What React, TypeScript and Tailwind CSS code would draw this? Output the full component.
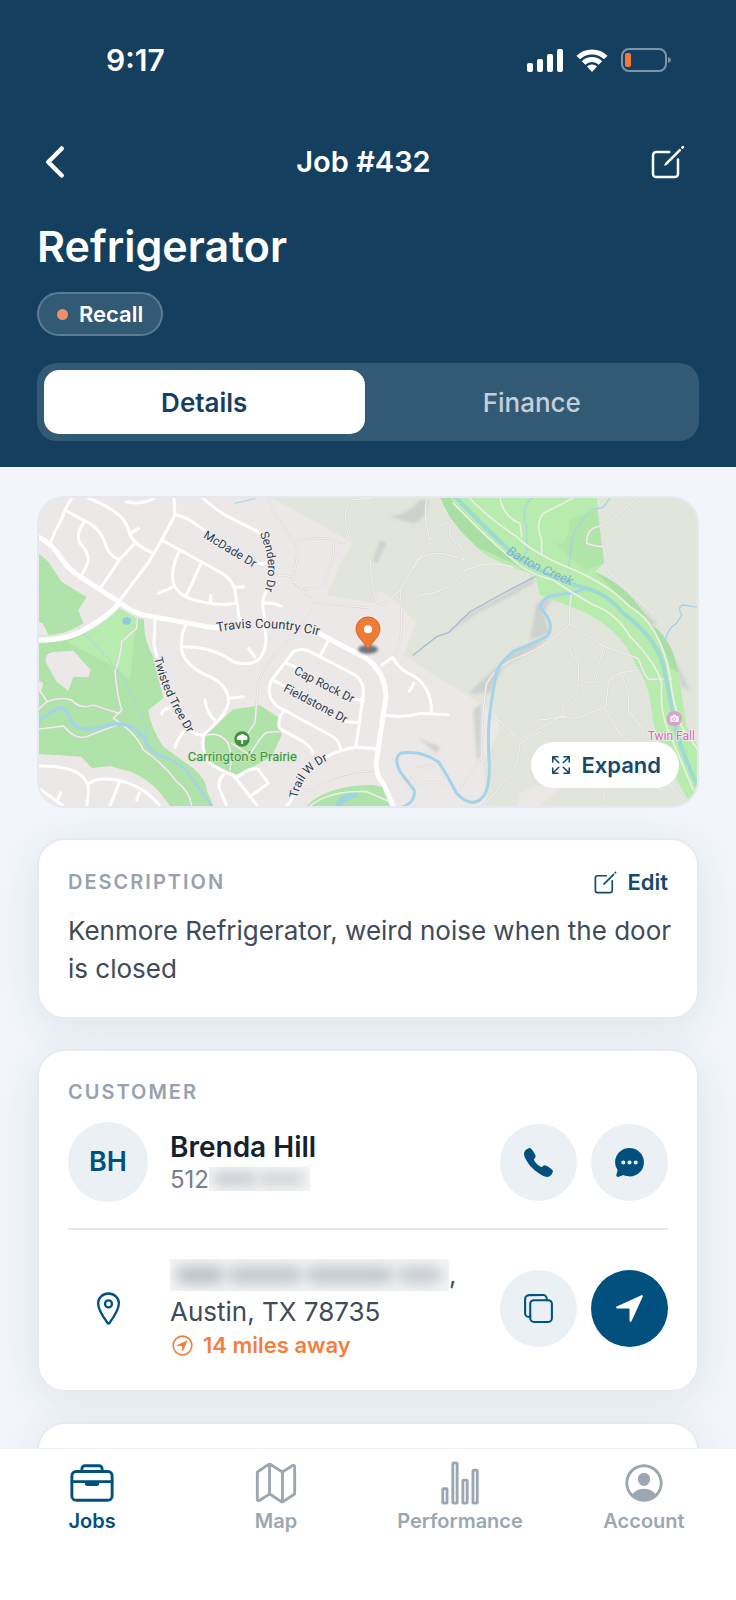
import React, { useState } from 'react';
import {
  IoBriefcaseOutline,
  IoCall,
  IoChatbubbleEllipses,
  IoChevronBack,
  IoCopyOutline,
  IoCreateOutline,
  IoExpandOutline,
  IoLocationOutline,
  IoMapOutline,
  IoNavigate,
  IoNavigateCircleOutline,
  IoPersonCircleOutline,
  IoStatsChartOutline,
} from 'react-icons/io5';

const tabs = ['Details', 'Finance'];

const navItems = [
  { label: 'Jobs', icon: IoBriefcaseOutline },
  { label: 'Map', icon: IoMapOutline },
  { label: 'Performance', icon: IoStatsChartOutline },
  { label: 'Account', icon: IoPersonCircleOutline },
];

// Road geometry, grouped by line width
const mainRoads = [
  'M40 165 Q75 175 110 215 Q140 265 180 290 L300 368 Q345 405 400 410 L560 440 L600 444',
  'M40 480 Q150 485 215 435 Q260 412 298 370',
  'M900 462 L1030 530 Q1095 570 1098 650 L1068 850 Q1068 890 1090 910 L1122 985',
];

const streets = [
  'M155 54 L135 90 Q125 120 105 155 L90 190',
  'M135 90 L185 118 Q240 140 255 190 Q265 225 295 238',
  'M195 124 Q165 160 180 190 Q205 215 205 240 Q200 260 185 285',
  'M205 54 Q265 78 300 108 Q320 125 330 165 Q345 195 395 218',
  'M330 160 L356 146',
  'M345 190 L298 240 L243 322',
  'M320 66 Q370 75 405 54',
  'M462 54 L465 105 L425 180 L385 248 L300 360',
  'M467 105 Q500 110 530 135 L556 152',
  'M425 180 L545 246 L610 282 Q645 305 648 350 L660 428',
  'M545 50 Q590 95 640 118 Q690 142 725 162',
  'M480 210 Q450 265 460 310 Q475 350 530 362 Q600 380 648 370',
  'M545 246 L498 350',
  'M455 323 L415 340 M572 370 L572 346 M648 322 L670 320',
  'M700 245 Q725 255 740 248',
  'M742 330 Q728 345 728 380 Q738 420 735 450 Q745 500 720 535 Q690 562 640 545 Q580 500 490 500',
  'M730 370 Q760 366 783 378 M686 506 L704 530',
  'M405 420 L402 490 L410 528',
  'M498 432 Q480 470 485 510 Q495 560 570 590 Q630 620 625 670 Q615 710 555 760 Q540 790 560 840 Q590 870 640 885 L712 978',
  'M625 655 L670 650 M555 660 Q560 700 588 725',
  'M425 702 Q430 685 448 684 M465 803 Q475 770 492 755 M515 755 Q530 765 550 766',
  'M610 885 Q590 905 600 930 L620 978',
  'M655 890 Q690 860 715 868 L745 910 L697 945',
  'M925 482 L902 525',
  'M820 515 Q850 500 880 520 L1000 582 Q1032 600 1030 640 L1008 800',
  'M820 515 L755 600 Q735 645 770 678 L930 765 Q960 780 962 810',
  'M800 550 L828 562 M762 602 L792 618 M998 655 L1030 662 M978 725 L1018 728',
  'M792 692 Q770 720 778 745 L850 785 Q875 800 880 822',
  'M800 978 Q812 968 818 950 M915 832 Q970 805 1010 802 L1072 806',
  'M54 858 Q140 858 175 880 Q210 905 205 940 L200 978',
  'M205 912 Q230 890 290 900 Q370 915 420 978',
  'M54 922 Q90 950 130 978 M122 938 L114 958 M298 908 L270 978 M358 938 L350 960',
  'M1085 555 L1118 532 Q1135 570 1185 590 Q1235 625 1234 695',
  'M1182 610 L1168 634 M1095 706 Q1150 715 1200 700 L1284 704',
];

const trails = [
  'M54 690 L80 665 Q120 650 155 660 Q180 690 220 675 Q260 690 300 700 M58 630 L82 665',
  'M352 415 L350 445 L305 485 Q302 530 285 575 Q290 640 305 690 L280 715 Q350 760 370 810 Q430 850 470 905 Q510 935 515 978',
  'M54 748 L130 738 Q165 780 200 770 L290 735',
  'M745 54 Q755 100 790 135 Q810 170 820 190 Q870 165 940 180 Q980 205 985 165 Q965 110 990 60 L1060 54',
  'M985 165 Q1005 200 1050 240 Q1055 300 1065 350 L1075 385 M830 188 Q835 250 818 295 Q830 330 880 325 Q925 320 915 290 Q950 230 938 185',
  'M775 285 L818 290 M818 295 Q860 345 880 365 Q1000 380 1065 385',
  'M890 370 Q830 470 760 530 Q710 590 712 640 L705 728 L685 758',
  'M560 765 Q600 755 625 790 L635 830 L630 870 M635 790 L690 825 Q720 770 740 757 L780 755',
  'M845 920 Q870 950 900 910 Q980 875 1060 872',
  'M1050 385 Q1090 380 1140 330 L1180 260 L1190 240 Q1250 200 1330 240 M1145 390 L1200 345 Q1290 340 1330 275 Q1400 235 1480 262',
  'M1140 330 Q1150 420 1140 490 L1118 530 M1220 54 Q1210 120 1230 180 L1182 265 M1230 180 Q1275 110 1290 130 Q1280 180 1325 200 L1330 240',
  'M1655 338 Q1645 400 1650 432 Q1580 500 1500 530 Q1430 555 1400 610 Q1385 700 1385 830 L1310 940',
  'M1650 432 L1755 500 L1855 535 Q1870 580 1885 598 L1955 596',
  'M1650 490 Q1640 520 1675 545 L1675 605 L1725 608 Q1735 560 1752 500 M1675 610 L1670 640 L1625 680 L1635 710 L1560 720',
  'M1850 570 Q1770 580 1765 610 L1758 680 L1670 715 L1620 710 L1500 780 Q1450 730 1420 710',
  'M1755 685 L1800 760 L1910 870 L2010 978 M1800 580 Q1830 620 1825 690 L1870 750',
  'M1560 755 L1500 790 Q1490 880 1450 910 L1390 978 M1750 920 L1755 978',
  'M1755 250 Q1770 290 1800 310 L1900 400 M1850 54 Q1770 130 1735 140 Q1700 145 1700 190 Q1730 200 1750 200 L1765 250',
  'M1170 900 Q1240 830 1300 920 M1165 930 Q1250 870 1340 960 M1190 860 L1260 850',
];

const parkTrails = [
  'M1300 70 L1350 120 Q1420 190 1480 240 Q1520 280 1600 300 Q1650 335 1720 375 Q1790 400 1830 470 Q1910 550 1925 610 Q1920 690 1940 740 L2020 930',
  'M1345 50 Q1400 110 1490 170 Q1540 220 1650 265 Q1760 310 1830 380 Q1920 430 1950 590 Q1960 680 1985 740 L2034 810',
  'M1440 54 Q1450 110 1500 130 L1505 170 M1660 54 L1570 100 Q1545 130 1565 180 L1565 220',
];

const MapCanvas: React.FC = () => (
  <svg
    viewBox="57 54 1974 924"
    preserveAspectRatio="xMidYMid slice"
    role="img"
    aria-label="Map of the job location"
    className="block h-[308px] w-full bg-[#ece8e7] font-[Roboto,sans-serif]"
  >
    <defs>
      <path id="sendero" d="M719 160 Q744 220 744 262 Q744 300 730 350" />
      <path id="travis" d="M592 456 Q745 425 925 474" />
      <path id="twisted" d="M402 534 Q424 640 516 780" />
      <path id="trail" d="M832 956 Q845 870 945 832" />
      <path id="barton" d="M1458 220 Q1530 270 1700 336" />
      <filter id="soft" x="-20%" y="-20%" width="140%" height="140%">
        <feGaussianBlur stdDeviation="5" />
      </filter>
    </defs>

    {/* Open land */}
    <path
      d="M750 50 L1000 190 Q960 240 945 290 L920 345 L1060 368 L1080 330 L1140 375 L1188 430 L1150 525 L1240 585 L1350 650 L1430 705 L1440 750 L1390 850 L1400 978 L2040 978 L2040 50 Z"
      fill="#e1e5dc"
    />
    <path d="M1500 940 Q1580 900 1640 910 L1560 978 L1490 978 Z" fill="#ebe7e5" />

    {/* Hill shading */}
    <g fill="#c6cbca" filter="url(#soft)" opacity="0.75">
      <path d="M1200 60 L1225 60 Q1220 120 1180 130 L1110 110 Q1170 100 1200 60 Z" />
      <path d="M1060 240 L1080 180 L1100 190 L1070 250 Z" />
      <path d="M1280 460 L1350 400 L1460 340 L1545 290 L1540 310 L1440 365 L1370 400 L1290 455 Z" />
      <path d="M1550 370 L1600 350 L1570 400 L1590 460 L1530 480 Z" />
      <path d="M1430 560 L1480 510 L1590 470 L1540 510 L1450 560 L1410 640 L1345 640 Z" />
      <path d="M1740 300 L1840 360 L1910 430 L1890 440 L1800 360 Z" />
      <path d="M1195 775 L1260 800 L1250 820 Z M1960 530 L2010 630 L1985 620 Z" />
      <path d="M1360 690 L1385 670 L1380 850 L1370 830 Z" />
    </g>

    {/* Parks */}
    <g fill="#b0e3a9">
      <path d="M54 218 L85 245 L125 305 L200 352 L175 390 L190 430 Q130 470 54 468 Z" />
      <path d="M54 485 L140 480 Q230 455 298 385 L350 415 L372 418 Q370 480 400 530 L430 655 L385 690 Q390 740 430 800 L520 865 Q560 900 560 930 L580 978 L450 978 Q400 900 330 875 L270 858 L215 865 L185 830 L54 822 Z" />
      <path d="M640 688 L720 676 L775 712 L785 765 L755 830 L690 865 L645 885 L570 845 Q545 800 555 765 Z" />
      <path d="M860 978 Q920 915 1060 915 L1100 925 L1120 978 Z" />
    </g>
    <path d="M140 485 Q230 455 298 385 L350 415 L330 600 L290 565 Z" fill="#b8ebae" />
    <path
      d="M1262 50 L1730 50 L1740 150 L1752 250 L1725 275 Q1830 320 1890 430 Q1960 480 1975 580 L2000 740 L2040 810 L2040 978 L2015 978 L1930 830 L1898 720 Q1890 610 1850 560 Q1800 430 1640 375 L1560 345 L1545 285 Q1400 240 1370 200 Q1280 120 1262 50 Z"
      fill="#b8ebae"
    />
    <g fill="#a9dfa4">
      <path d="M1262 54 L1290 54 Q1360 150 1480 240 L1530 275 L1370 200 Q1290 130 1262 54 Z" />
      <path d="M1590 170 Q1640 230 1650 120 L1730 90 L1740 150 L1752 250 L1700 270 Q1650 240 1590 170 Z" opacity="0.5" />
      <path d="M1725 275 Q1830 320 1890 430 Q1960 480 1975 580 L1950 560 Q1920 440 1830 380 Z" />
    </g>
    <path d="M78 548 Q70 520 105 515 L160 512 L185 540 L212 570 L205 592 L160 590 L145 632 L110 605 Z" fill="#ece8e7" />
    <path d="M54 425 L68 430 L85 465 L54 468 Z M54 600 L70 610 L65 630 L54 632 Z" fill="#ece8e7" />

    {/* Minor trails sit under the water and streets */}
    <g fill="none" strokeLinecap="round" strokeLinejoin="round">
      <g stroke="#d3d1cf" strokeWidth="6">
        {trails.map((d) => (
          <path key={d} d={d} />
        ))}
      </g>
      <g stroke="#f1efed" strokeWidth="4">
        {trails.map((d) => (
          <path key={d} d={d} />
        ))}
      </g>
    </g>

    {/* Water */}
    <g fill="none" stroke="#a4d3ea" strokeLinecap="round">
      <path d="M54 725 Q95 690 125 683 Q145 695 155 730 Q190 755 230 745 L290 730 Q350 735 375 780 Q390 820 430 830" strokeWidth="10" />
      <path d="M430 830 Q490 850 520 900 L575 978" strokeWidth="7" />
      <path d="M54 322 Q110 350 150 415 Q200 470 240 510 Q310 580 330 640 Q375 700 382 780" strokeWidth="3" opacity="0.8" />
      <path d="M1135 985 Q1190 970 1182 930 L1140 875 Q1120 835 1142 820 Q1200 810 1255 845 Q1285 890 1310 940 Q1350 985 1385 955 Q1410 930 1408 850 Q1400 750 1415 660 L1425 600 Q1425 560 1480 515 Q1540 490 1580 470 Q1605 440 1575 400 Q1545 370 1590 348 L1650 340 L1700 325" strokeWidth="9" />
      <path d="M1310 54 Q1410 160 1490 230 Q1600 300 1700 325 Q1760 340 1810 400 Q1920 480 1935 580 Q1955 680 1965 740 Q1990 830 2034 920" stroke="#9fdad2" strokeWidth="12" />
      <path d="M1535 54 Q1500 90 1520 140 L1520 220 M1770 54 L1750 82 L1710 90 L1660 160 L1645 270" strokeWidth="5" opacity="0.7" />
      <path d="M1180 525 L1250 470 L1285 458 L1350 395 L1440 345 L1545 290" stroke="#a5bbd6" strokeWidth="4" />
      <path d="M1935 500 Q1935 450 1970 430 L1985 405 Q1970 380 1990 375 L2034 382" strokeWidth="4" />
      <path d="M645 70 L705 56" strokeWidth="3" />
    </g>
    <ellipse cx="320" cy="423" rx="13" ry="11" fill="#8ecbe0" />
    <path d="M945 978 Q955 940 1010 937 Q1030 945 975 965 L965 978 Z" fill="#9ed3e0" />

    {/* Roads */}
    <g fill="none" strokeLinecap="round" strokeLinejoin="round">
      <g stroke="#ecefe4" strokeWidth="5">
        {parkTrails.map((d) => (
          <path key={d} d={d} />
        ))}
        <path d="M870 978 Q930 930 1040 935 L1110 965" />
      </g>
      <g stroke="#ffffff" strokeWidth="9">
        {streets.map((d) => (
          <path key={d} d={d} />
        ))}
      </g>
      <g stroke="#ffffff" strokeWidth="15">
        {mainRoads.map((d) => (
          <path key={d} d={d} />
        ))}
      </g>
    </g>

    {/* Labels */}
    <g
      fontSize="36"
      fill="#2f3b4f"
      stroke="#f3f0ef"
      strokeWidth="6"
      strokeLinejoin="round"
      paintOrder="stroke"
    >
      <text transform="translate(548 172) rotate(31)">McDade Dr</text>
      <text transform="translate(820 580) rotate(27)">Cap Rock Dr</text>
      <text transform="translate(788 632) rotate(28)">Fieldstone Dr</text>
      <text><textPath href="#sendero">Sendero Dr</textPath></text>
      <text fontSize="39"><textPath href="#travis">Travis Country Cir</textPath></text>
      <text><textPath href="#twisted">Twisted Tree Dr</textPath></text>
      <text><textPath href="#trail">Trail W Dr</textPath></text>
      <text fill="#7db3cf" stroke="none" fontStyle="italic" fontSize="39">
        <textPath href="#barton">Barton Creek</textPath>
      </text>
      <text x="667" y="844" textAnchor="middle" fill="#43903f" stroke="#c6ecc0" strokeWidth="4" fontSize="39">
        Carrington’s Prairie
      </text>
      <text x="1883" y="781" fill="#cf6db2" strokeWidth="5">
        Twin Fall
      </text>
    </g>

    {/* Points of interest */}
    <circle cx="666" cy="777" r="23" fill="#43903f" />
    <path d="M652 780 Q648 768 660 766 Q667 758 674 766 Q686 768 681 780 L669 781 L669 792 L664 792 L664 781 Z" fill="#fff" />
    <circle cx="1963" cy="716" r="23" fill="#dd9fd2" />
    <path d="M1951 709 H1957 L1960 704 H1967 L1970 709 H1976 V726 H1951 Z" fill="#fff" />
    <circle cx="1963" cy="717" r="5" fill="#fff" stroke="#dd9fd2" strokeWidth="3" />

    {/* Job pin */}
    <ellipse cx="1044" cy="508" rx="30" ry="13" fill="#6c7480" filter="url(#soft)" />
    <path
      d="M1044 508 C1030 482 1008 470 1008 446 A36 35 0 0 1 1080 446 C1080 470 1058 482 1044 508 Z"
      fill="#ef7b37"
      stroke="#d9652a"
      strokeWidth="3"
    />
    <circle cx="1044" cy="448" r="12" fill="#fff" />
  </svg>
);

const StatusBar: React.FC = () => (
  <div className="flex h-8 items-center justify-between pr-7 pl-[69px] text-white">
    <span className="text-[30px] leading-8 font-semibold">9:17</span>
    <div className="flex items-center gap-[13px]">
      <svg width="36" height="24" viewBox="0 0 36 24" fill="currentColor" aria-hidden="true">
        <rect x="0" y="15" width="6" height="9" rx="2" />
        <rect x="10" y="11" width="6" height="13" rx="2" />
        <rect x="20" y="6" width="6" height="18" rx="2" />
        <rect x="30" y="1" width="6" height="23" rx="2" />
      </svg>
      <svg width="32" height="24" viewBox="0 0 32 24" aria-hidden="true">
        <g fill="none" stroke="currentColor" strokeWidth="5">
          <path d="M2.2 9.6 A19.5 19.5 0 0 1 29.8 9.6" />
          <path d="M7.6 15 A12 12 0 0 1 24.4 15" />
        </g>
        <path d="M16 24 L11 18.6 A7 7 0 0 1 21 18.6 Z" fill="currentColor" />
      </svg>
      <svg width="50" height="24" viewBox="0 0 50 24" aria-hidden="true">
        <rect x="1" y="1" width="44" height="22" rx="7" fill="none" stroke="#7d95a8" strokeWidth="2" />
        <rect x="4" y="5" width="6" height="14" rx="2" fill="#f27a35" />
        <path d="M47 9 Q50 10 50 12 Q50 14 47 15 Z" fill="#7d95a8" />
      </svg>
    </div>
  </div>
);

interface CircleButtonProps {
  label: string;
  primary?: boolean;
  children: React.ReactNode;
}

const CircleButton: React.FC<CircleButtonProps> = ({ label, primary, children }) => (
  <button
    type="button"
    aria-label={label}
    className={`flex size-[77px] shrink-0 items-center justify-center rounded-full ${
      primary ? 'bg-[#02507d] text-white' : 'bg-[#ebf0f5] text-[#02507d]'
    }`}
  >
    {children}
  </button>
);

const Card: React.FC<{ className?: string; children?: React.ReactNode }> = ({ className = '', children }) => (
  <section
    className={`rounded-[28px] border-2 border-[#e7ebf1] bg-white px-[29px] pt-[26px] shadow-[0_8px_44px_rgba(40,55,75,0.09)] ${className}`}
  >
    {children}
  </section>
);

const CardTitle: React.FC<{ children: React.ReactNode }> = ({ children }) => (
  <h2 className="text-[20px] leading-[30px] font-semibold tracking-widest text-[#98a2ae] uppercase">{children}</h2>
);

const App: React.FC = () => {
  const [activeTab, setActiveTab] = useState('Details');
  const [activeNav, setActiveNav] = useState('Jobs');

  return (
    <div className="flex h-screen flex-col bg-[#f2f6fb] font-[Inter,'Liberation_Sans',sans-serif]">
      <header className="relative z-10 shrink-0 bg-[#143f5e] px-[37px] pt-11 pb-[26px] text-white">
        <StatusBar />

        <div className="mt-[62px] flex h-12 items-center justify-between pr-[11px]">
          <button type="button" aria-label="Back" className="-ml-1.5">
            <IoChevronBack size={48} />
          </button>
          <p className="text-[29px] leading-9 font-semibold">Job #432</p>
          <button type="button" aria-label="Edit job">
            <IoCreateOutline size={40} />
          </button>
        </div>

        <h1 className="mt-8 text-[43px] leading-[56px] font-semibold">Refrigerator</h1>

        <div className="mt-[18px] flex h-11 w-fit items-center gap-[11px] rounded-full border-2 border-[#5c7a91] bg-[#335a75] px-[18px]">
          <span className="size-[11px] rounded-full bg-[#ee8f67]" />
          <span className="text-[22px] leading-8 font-semibold">Recall</span>
        </div>

        <div role="tablist" className="mt-[27px] flex gap-[7px] rounded-[20px] bg-[#335a75] p-[7px]">
          {tabs.map((tab) => (
            <button
              key={tab}
              type="button"
              role="tab"
              aria-selected={activeTab === tab}
              onClick={() => setActiveTab(tab)}
              className={`h-16 flex-1 rounded-[15px] text-[26px] ${
                activeTab === tab ? 'bg-white font-semibold text-[#143f5e]' : 'font-medium text-[#c3d0db]'
              }`}
            >
              {tab}
            </button>
          ))}
        </div>
      </header>

      <main className="flex min-h-0 flex-1 flex-col gap-[30px] overflow-y-auto px-[37px] pt-[29px] [scrollbar-width:none] *:shrink-0">
        <section className="relative overflow-hidden rounded-[28px] border-2 border-[#e4e9ef]">
          <MapCanvas />
          <button
            type="button"
            className="absolute right-[18px] bottom-[18px] flex h-[46px] items-center gap-2 rounded-full bg-white px-[18px] text-[22px] font-semibold text-[#134a70]"
          >
            <IoExpandOutline size={24} />
            Expand
          </button>
        </section>

        <Card className="pb-[29px]">
          <div className="flex items-center justify-between">
            <CardTitle>Description</CardTitle>
            <button type="button" className="flex items-center gap-2 text-[22px] leading-8 font-semibold text-[#134a70]">
              <IoCreateOutline size={27} />
              Edit
            </button>
          </div>
          <p className="mt-[14px] -mr-2 text-[26px] leading-[38px] text-[#3f4b5a]">
            Kenmore Refrigerator, weird noise when the door is closed
          </p>
        </Card>

        <Card className="pb-[30px]">
          <CardTitle>Customer</CardTitle>
          <div className="mt-[15px] flex items-center border-b-2 border-[#e3e8ef] pb-[26px]">
            <div className="flex size-20 shrink-0 items-center justify-center rounded-full bg-[#ebf0f5] text-[27px] font-semibold text-[#02507d]">
              BH
            </div>
            <div className="ml-[22px] min-w-0 flex-1">
              <p className="text-[28px] leading-[34px] font-semibold text-[#14212f]">Brenda Hill</p>
              <p className="flex items-center text-2xl leading-[31px] text-[#76808d]">
                512
                <span className="flex h-6 w-[101px] items-center overflow-hidden bg-[#f3f4f5] px-1" aria-hidden="true">
                  <span className="h-4 w-11 rounded-full bg-[#ccd1d5] blur-[6px]" />
                  <span className="h-4 w-12 rounded-full bg-[#d5d9da] blur-[6px]" />
                </span>
              </p>
            </div>
            <div className="flex gap-[14px]">
              <CircleButton label="Call customer">
                <IoCall size={33} />
              </CircleButton>
              <CircleButton label="Message customer">
                <IoChatbubbleEllipses size={33} />
              </CircleButton>
            </div>
          </div>

          <div className="flex items-center pt-[26px]">
            <div className="flex w-20 shrink-0 justify-center text-[#02507d]">
              <IoLocationOutline size={37} />
            </div>
            <div className="ml-[22px] min-w-0 flex-1">
              <address className="text-[26px] leading-[37px] text-[#3f4b5a] not-italic">
                <span className="flex items-center">
                  <span className="flex h-8 w-[279px] items-center gap-1 overflow-hidden bg-[#f3f4f5] px-1.5" aria-hidden="true">
                    <span className="h-4 w-12 rounded-full bg-[#b3bac0] blur-[7px]" />
                    <span className="h-4 w-[74px] rounded-full bg-[#bcc3c8] blur-[7px]" />
                    <span className="h-4 w-[88px] rounded-full bg-[#bcc3c8] blur-[7px]" />
                    <span className="h-4 w-11 rounded-full bg-[#c2c8cc] blur-[7px]" />
                  </span>
                  ,
                </span>
                Austin, TX 78735
              </address>
              <p className="flex items-center gap-2 text-[22px] leading-[30px] font-semibold text-[#f27f3d]">
                <IoNavigateCircleOutline size={25} />
                14 miles away
              </p>
            </div>
            <div className="flex gap-[14px]">
              <CircleButton label="Copy address">
                <IoCopyOutline size={33} />
              </CircleButton>
              <CircleButton label="Start navigation" primary>
                <IoNavigate size={33} />
              </CircleButton>
            </div>
          </div>
        </Card>

        <Card className="h-40" />
      </main>

      <nav className="relative grid h-[152px] shrink-0 grid-cols-4 items-start border-t border-[#eaf0f9] bg-white pt-[11px]">
        {navItems.map(({ label, icon: Icon }) => (
          <button
            key={label}
            type="button"
            onClick={() => setActiveNav(label)}
            className={`flex flex-col items-center text-xl leading-[30px] font-semibold ${
              activeNav === label ? 'text-[#02507d]' : 'text-[#9ba7b3]'
            }`}
          >
            <Icon size={46} />
            {label}
          </button>
        ))}
      </nav>
    </div>
  );
};

export default App;
